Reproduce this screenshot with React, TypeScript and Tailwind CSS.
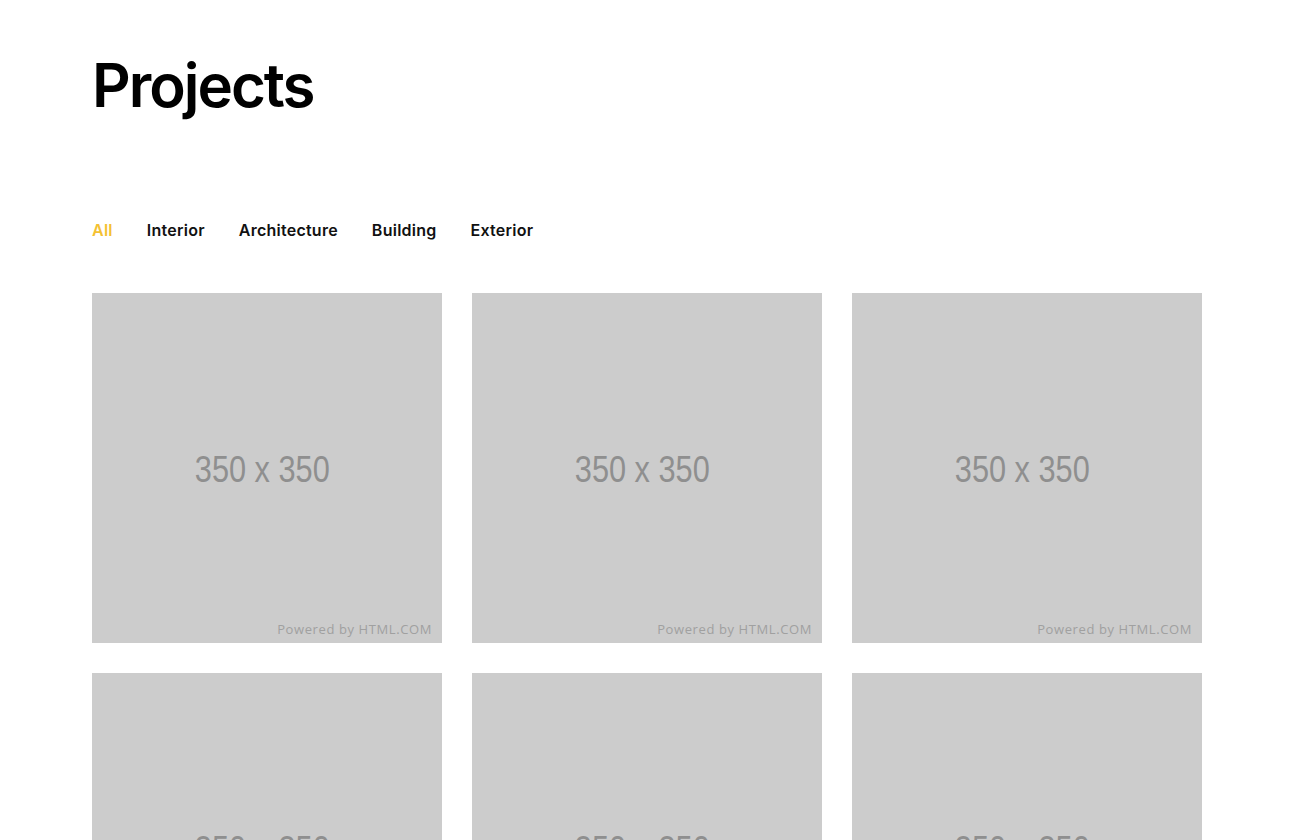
const filters = ["All", "Interior", "Architecture", "Building", "Exterior"];

function Placeholder() {
    return (
        <div className="relative w-[350px] h-[350px] bg-[#cccccc] flex items-center justify-center shrink-0">
            <span className="text-[37px] leading-none text-[#8f8f8f] -ml-[10px] mt-[3px] scale-x-[0.83] font-['Liberation_Sans',Arial,sans-serif]">
                350 x 350
            </span>
            <span className="absolute right-[10px] bottom-[7px] text-[13px] leading-none tracking-[0.6px] text-[#a0a0a0] font-['Open_Sans',sans-serif]">
                Powered by HTML.COM
            </span>
        </div>
    );
}

export default function App() {
    const active = "All";
    return (
        <div className="bg-white px-[92px] pt-[52px] overflow-hidden h-[840px]">
            <h1 className="text-[60px] leading-[66px] font-semibold tracking-[-2px] text-black font-['Inter',sans-serif]">
                Projects
            </h1>
            <nav className="flex gap-[34px] mt-[102px] font-['Inter',sans-serif]">
                {filters.map(f => (
                    <button
                        key={f}
                        className={`text-[16px] font-semibold tracking-[0.25px] leading-5 ${f === active ? "text-[#f4c132]" : "text-[#111111]"}`}
                    >
                        {f}
                    </button>
                ))}
            </nav>
            <div className="grid grid-cols-[350px_350px_350px] gap-[30px] mt-[53px]">
                {Array.from({ length: 6 }).map((_, i) => (
                    <Placeholder key={i} />
                ))}
            </div>
        </div>
    );
}
